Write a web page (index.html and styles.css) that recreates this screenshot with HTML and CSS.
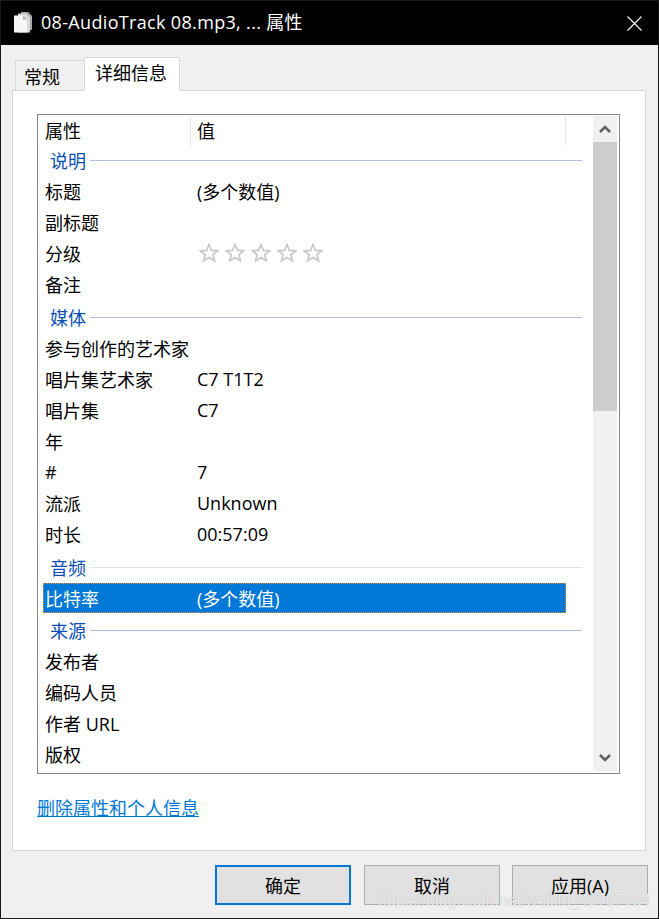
FILE: index.html
```html
<!DOCTYPE html>
<html lang="zh-CN">
<head>
  <meta charset="UTF-8">
  <title>08-AudioTrack 08.mp3, ... 属性</title>
  <link rel="stylesheet" href="styles.css">
</head>
<body>
  <div class="fenster">

    <div class="titel">
      <svg class="datei-icon" width="20" height="22" viewBox="0 0 20 22">
        <path d="M8 0h7l4 4v14H8z" fill="#a8a8a8"/>
        <path d="M5 1.500h8l4 4v15H5z" fill="#d8d8d8"/>
        <path d="M1 3.500h9l4 4v13H1z" fill="#f6f6f6"/>
        <path d="M10 3.500v4h4z" fill="#b0b0b0"/>
      </svg>
      <span class="titel-text">08-AudioTrack 08.mp3, ... 属性</span>
      <svg class="schliessen" width="15" height="15" viewBox="0 0 15 15">
        <path d="M0.500 0.500l14 14M14.500 0.500l-14 14" stroke="#fff" stroke-width="1.100" fill="none"/>
      </svg>
    </div>

    <div class="tabs">
      <div class="tab">常规</div>
      <div class="tab aktiv">详细信息</div>
    </div>

    <div class="panel">
      <div class="liste">
        <div class="zeilen">
          <div class="kopf">
            <div class="k1">属性</div>
            <div class="k2">值</div>
          </div>

          <div class="gruppe"><span>说明</span><i></i></div>
          <div class="zeile"><span class="name">标题</span><span>(多个数值)</span></div>
          <div class="zeile"><span class="name">副标题</span></div>
          <div class="zeile">
            <span class="name">分级</span>
            <span class="sterne">
              <svg width="20" height="20" viewBox="0 0 20 20"><path class="stern" d="M10 1.500l2.400 5.900 6.300.4-4.900 4 1.600 6.200-5.400-3.400-5.400 3.400 1.600-6.200-4.900-4 6.300-.4z"/></svg>
              <svg width="20" height="20" viewBox="0 0 20 20"><path class="stern" d="M10 1.500l2.400 5.900 6.300.4-4.900 4 1.600 6.200-5.400-3.400-5.400 3.400 1.600-6.200-4.900-4 6.300-.4z"/></svg>
              <svg width="20" height="20" viewBox="0 0 20 20"><path class="stern" d="M10 1.500l2.400 5.900 6.300.4-4.900 4 1.600 6.200-5.400-3.400-5.400 3.400 1.600-6.200-4.900-4 6.300-.4z"/></svg>
              <svg width="20" height="20" viewBox="0 0 20 20"><path class="stern" d="M10 1.500l2.400 5.900 6.300.4-4.900 4 1.600 6.200-5.400-3.400-5.400 3.400 1.600-6.200-4.900-4 6.300-.4z"/></svg>
              <svg width="20" height="20" viewBox="0 0 20 20"><path class="stern" d="M10 1.500l2.400 5.900 6.300.4-4.900 4 1.600 6.200-5.400-3.400-5.400 3.400 1.600-6.200-4.900-4 6.300-.4z"/></svg>
            </span>
          </div>
          <div class="zeile"><span class="name">备注</span></div>

          <div class="gruppe"><span>媒体</span><i></i></div>
          <div class="zeile"><span class="name">参与创作的艺术家</span></div>
          <div class="zeile"><span class="name">唱片集艺术家</span><span>C7 T1T2</span></div>
          <div class="zeile"><span class="name">唱片集</span><span>C7</span></div>
          <div class="zeile"><span class="name">年</span></div>
          <div class="zeile"><span class="name">#</span><span>7</span></div>
          <div class="zeile"><span class="name">流派</span><span>Unknown</span></div>
          <div class="zeile"><span class="name">时长</span><span>00:57:09</span></div>

          <div class="gruppe blass"><span>音频</span><i></i></div>
          <div class="zeile gewaehlt"><span class="name">比特率</span><span>(多个数值)</span></div>

          <div class="gruppe"><span>来源</span><i></i></div>
          <div class="zeile"><span class="name">发布者</span></div>
          <div class="zeile"><span class="name">编码人员</span></div>
          <div class="zeile"><span class="name">作者 URL</span></div>
          <div class="zeile"><span class="name">版权</span></div>
        </div>

        <div class="scrollbar">
          <div class="pfeil">
            <svg width="12" height="8" viewBox="0 0 12 8"><path d="M1 7l5-5 5 5" fill="none" stroke="#606060" stroke-width="2.600"/></svg>
          </div>
          <div class="daumen"></div>
          <div class="rest"></div>
          <div class="pfeil">
            <svg width="12" height="8" viewBox="0 0 12 8"><path d="M1 1l5 5 5-5" fill="none" stroke="#606060" stroke-width="2.600"/></svg>
          </div>
        </div>
      </div>

      <a class="link" href="#">删除属性和个人信息</a>
    </div>

    <div class="knoepfe">
      <button class="knopf standard">确定</button>
      <button class="knopf">取消</button>
      <button class="knopf">应用(A)</button>
    </div>

    <div class="wasserzeichen">https://blog.csdn.net/weixin_43767154</div>
  </div>
</body>
</html>
```

FILE: styles.css
```css
* {
  box-sizing: border-box;
}

html, body {
  margin: 0;
  height: 100%;
  background: #fff;
}

body {
  font-family: "Open Sans", "Noto Sans CJK SC", sans-serif;
  font-size: 18px;
  color: #000;
}

.fenster {
  position: relative;
  width: 659px;
  height: 919px;
  background: #f0f0f0;
  border: 1px solid #1a1a1a;
  overflow: hidden;
}

/* Titelleiste */
.titel {
  display: flex;
  align-items: center;
  height: 44px;
  background: #000;
  color: #fff;
  padding: 0 16px 0 12px;
}

.datei-icon {
  flex: none;
  margin-right: 8px;
}

.titel-text {
  flex: 1;
  white-space: nowrap;
  letter-spacing: 0.33px;
  padding-bottom: 4px;
}

/* Tabs */
.tabs {
  display: flex;
  align-items: flex-end;
  height: 46px;
  padding-left: 14px;
  position: relative;
  z-index: 1;
  margin-bottom: -1px;
}

.tab {
  width: 70px;
  height: 31px;
  border: 1px solid #d9d9d9;
  padding-left: 8px;
  line-height: 32px;
  background: #f0f0f0;
}

.tab.aktiv {
  width: 96px;
  height: 34px;
  margin-left: -1px;
  background: #fff;
  border-bottom: 1px solid #fff;
  padding-left: 10px;
  line-height: 30px;
}

/* Inhalt */
.panel {
  width: 634px;
  height: 761px;
  margin-left: 11px;
  background: #fff;
  border: 1px solid #d9d9d9;
  padding: 23px 24px 0;
}

.liste {
  display: flex;
  width: 583px;
  height: 660px;
  border: 1px solid #828790;
  padding: 1px 2px 2px 0;
}

.zeilen {
  flex: 1;
  padding-left: 5px;
}

.kopf {
  display: flex;
  height: 30px;
  margin-bottom: -1px;
  line-height: 30px;
}

.k1 {
  width: 148px;
  padding-left: 2px;
  border-right: 1px solid #e5e5e5;
}

.k2 {
  width: 375px;
  padding-left: 6px;
  border-right: 1px solid #e5e5e5;
}

.gruppe {
  display: flex;
  align-items: center;
  height: 31px;
  margin-top: 2px;
  padding: 0 0 2px 7px;
  width: 539px;
  color: #0a4fb5;
}

.kopf + .gruppe {
  margin-top: 0;
}

.gruppe i {
  flex: 1;
  height: 1px;
  margin: 2px 0 0 4px;
  background: #b0c0e4;
}

.gruppe.blass i {
  background: #dbe2f2;
}

.zeile {
  display: flex;
  align-items: center;
  width: 523px;
  height: 31px;
  padding: 0 0 2px 2px;
}

.zeile .name {
  flex: none;
  width: 152px;
  white-space: nowrap;
}

.zeile.gewaehlt {
  height: 30px;
  margin-bottom: 1px;
  padding-bottom: 1px;
  background: #0078d7;
  color: #fff;
  outline: 1px dotted #e8913a;
  outline-offset: -1px;
}

.sterne {
  display: flex;
  gap: 6px;
  margin: 1px 0 0 2px;
}

.stern {
  fill: #fff;
  stroke: #c8c8c8;
  stroke-width: 1.700;
}

/* Scrollbar */
.scrollbar {
  flex: none;
  display: flex;
  flex-direction: column;
  width: 24px;
  background: #f0f0f0;
}

.pfeil {
  display: flex;
  align-items: center;
  justify-content: center;
  height: 26px;
}

.daumen {
  height: 269px;
  background: #cdcdcd;
}

.rest {
  flex: 1;
}

/* Link unten */
.link {
  display: inline-block;
  margin-top: 21px;
  color: #0078d7;
  text-decoration: underline;
  line-height: 26px;
}

/* Buttons */
.knoepfe {
  display: flex;
  justify-content: flex-end;
  gap: 12px;
  padding: 14px 10px 0 0;
}

.knopf {
  width: 136px;
  height: 40px;
  font: inherit;
  color: #000;
  background: #e1e1e1;
  border: 1px solid #adadad;
  padding: 0 0 1px;
}

.knopf.standard {
  margin-right: 1px;
  border: 2px solid #0078d7;
}

.wasserzeichen {
  position: absolute;
  left: 377px;
  top: 891px;
  font-family: "Liberation Sans", sans-serif;
  font-size: 16px;
  color: rgba(255, 255, 255, 0.8);
  text-shadow: 0 0 1px rgba(120, 120, 120, 0.6);
  white-space: nowrap;
}
```
